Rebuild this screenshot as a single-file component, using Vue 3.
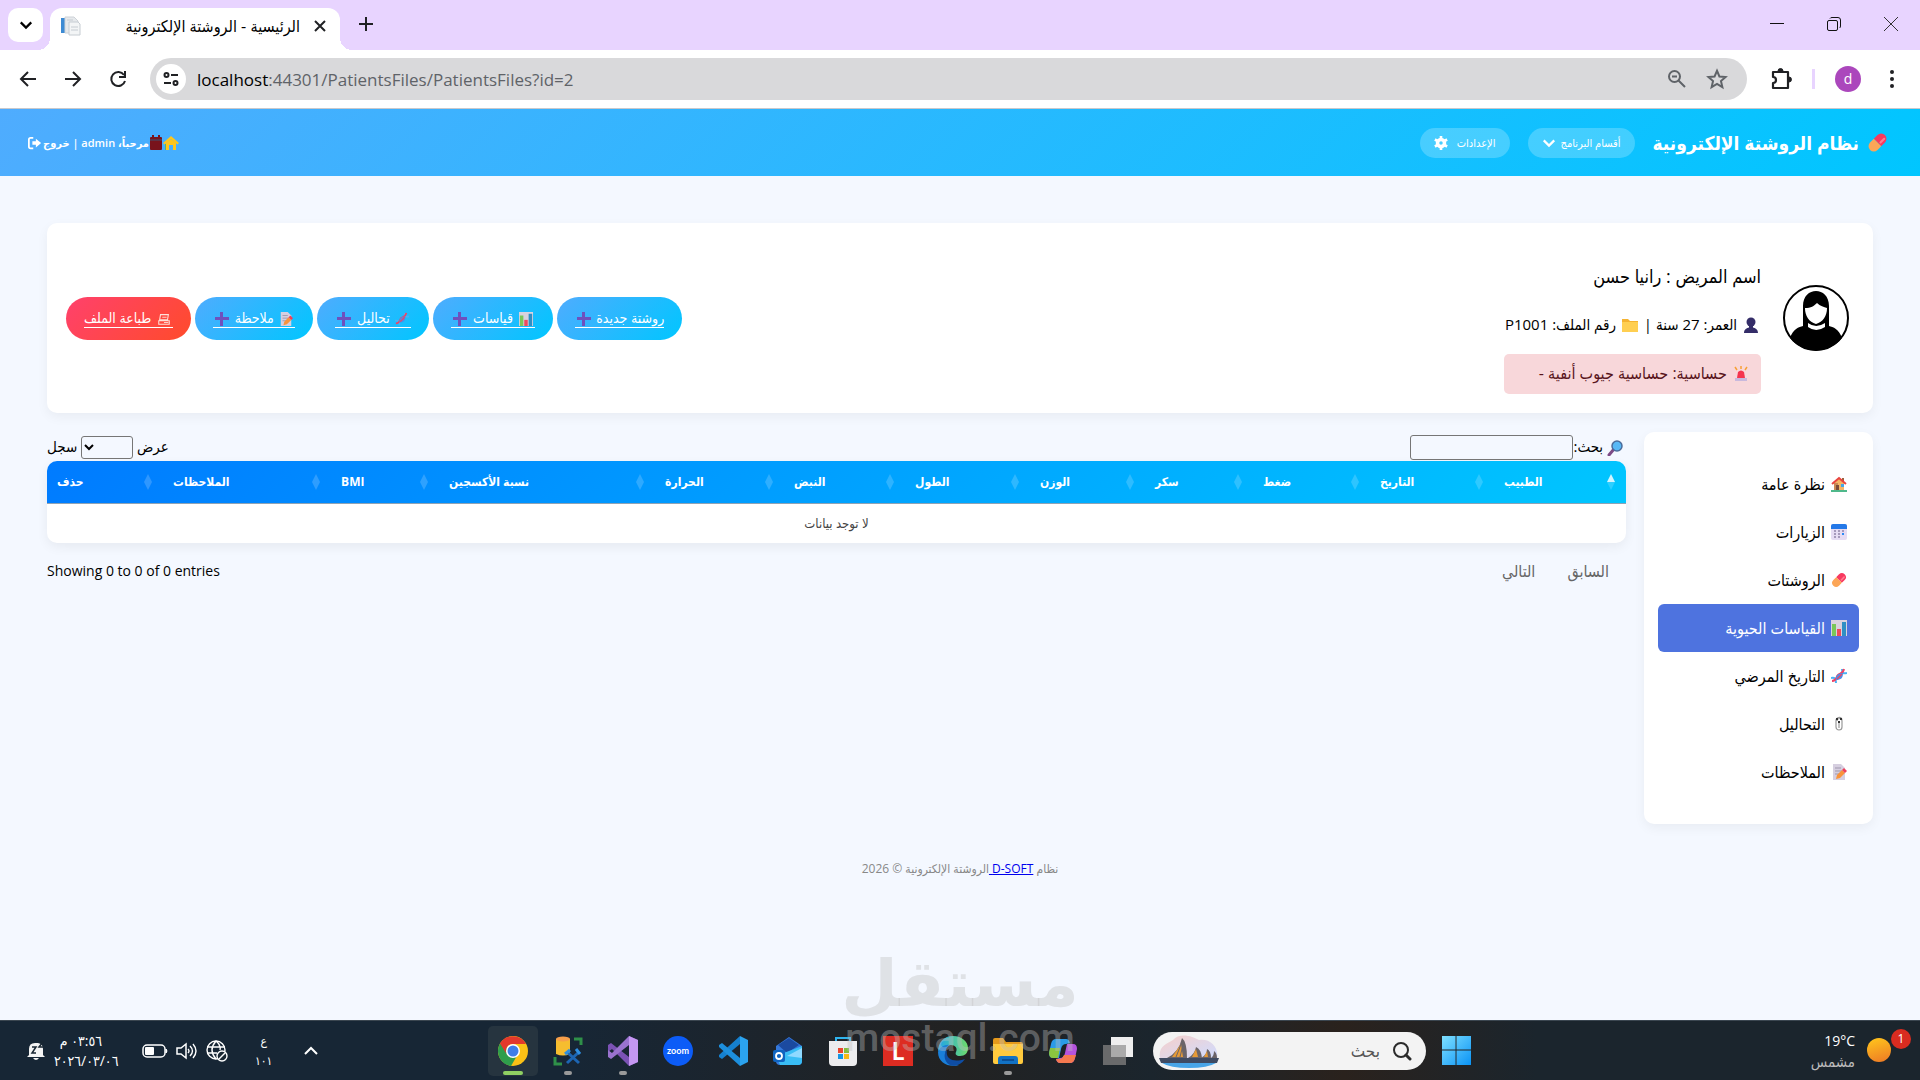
<script setup>
import { ref } from 'vue'

const search = ref('')
const pageSize = ref('')
const address = ref('localhost:44301/PatientsFiles/PatientsFiles?id=2')
const active = ref('vitals')

const actions = [
  { label: 'روشتة جديدة', plus: true },
  { label: 'قياسات', icon: 'chart', plus: true },
  { label: 'تحاليل', icon: 'dna', plus: true },
  { label: 'ملاحظة', icon: 'memo', plus: true },
  { label: 'طباعة الملف', icon: 'printer', danger: true },
]

const menu = [
  { id: 'overview', label: 'نظرة عامة', icon: 'house' },
  { id: 'visits', label: 'الزيارات', icon: 'calendar' },
  { id: 'rx', label: 'الروشتات', icon: 'pill' },
  { id: 'vitals', label: 'القياسات الحيوية', icon: 'chart' },
  { id: 'history', label: 'التاريخ المرضي', icon: 'dna' },
  { id: 'labs', label: 'التحاليل', icon: 'clip' },
  { id: 'notes', label: 'الملاحظات', icon: 'memo' },
]

// size = relative column width
const columns = [
  { label: 'الطبيب', size: 132 },
  { label: 'التاريخ', size: 124 },
  { label: 'ضغط', size: 117 },
  { label: 'سكر', size: 108 },
  { label: 'الوزن', size: 115 },
  { label: 'الطول', size: 125 },
  { label: 'النبض', size: 121 },
  { label: 'الحرارة', size: 129 },
  { label: 'نسبة الأكسجين', size: 216 },
  { label: 'BMI', size: 108 },
  { label: 'الملاحظات', size: 168 },
  { label: 'حذف', size: 116 },
]
const total = columns.reduce((sum, c) => sum + c.size, 0)

const apps = [
  { icon: 'chrome', current: true },
  { icon: 'ssms', open: true },
  { icon: 'vs', open: true },
  { icon: 'zoom', text: 'zoom' },
  { icon: 'vscode' },
  { icon: 'outlook' },
  { icon: 'store' },
  { icon: 'lapp', text: 'L' },
  { icon: 'edge' },
  { icon: 'explorer', open: true },
  { icon: 'copilot' },
  { icon: 'taskview' },
]
</script>

<template>
  <div class="screen">
    <!-- icon sprite -->
    <svg class="sprite" aria-hidden="true">
      <defs>
        <linearGradient id="g-win" x1="0" y1="0" x2="1" y2="1">
          <stop offset="0" stop-color="#7fe0ff" />
          <stop offset="1" stop-color="#0a93f5" />
        </linearGradient>
        <linearGradient id="g-edge" x1="0" y1="0" x2="1" y2="0">
          <stop offset="0" stop-color="#1fa4ea" />
          <stop offset="1" stop-color="#6fdc6a" />
        </linearGradient>
        <linearGradient id="g-sun" x1="0.3" y1="0" x2="0.6" y2="1">
          <stop offset="0" stop-color="#ffc21c" />
          <stop offset="1" stop-color="#ee7f25" />
        </linearGradient>
        <linearGradient id="g-sky" x1="0" y1="0" x2="1" y2="1">
          <stop offset="0" stop-color="#f7cfc9" />
          <stop offset="1" stop-color="#cfdcff" />
        </linearGradient>
      </defs>
      <symbol id="pill" viewBox="0 0 20 20">
        <g transform="rotate(45 10 10)">
          <path d="M5 10V5a5 5 0 0 1 10 0v5z" fill="#f8395f" />
          <path d="M5 10v5a5 5 0 0 0 10 0v-5z" fill="#fca657" />
          <path d="M12 3v5" stroke="#ff7b8f" stroke-width="2" stroke-linecap="round" />
        </g>
      </symbol>
      <symbol id="house" viewBox="0 0 16 16">
        <path d="M3 7l5-5 5 5v7H3z" fill="#f5b565" />
        <path d="M3 7h4v7H3z" fill="#c98a55" />
        <path d="M11 2h2v4h-2z" fill="#a0603c" />
        <path d="M1 8l7-6 7 6" fill="none" stroke="#e8443f" stroke-width="2" />
        <path d="M5 9h3v5H5z" fill="#7a4b3a" />
        <path d="M10 8h3v3h-3z" fill="#43a6e8" />
        <path d="M0 14h16v2H0z" fill="#4fb88b" />
      </symbol>
      <symbol id="calendar" viewBox="0 0 16 16">
        <rect width="16" height="16" rx="2" fill="#e6dcf3" />
        <path d="M0 5V2a2 2 0 0 1 2-2h12a2 2 0 0 1 2 2v3z" fill="#2479e8" />
        <path d="M3 7h10M3 10h10M3 13h7" stroke="#a69abb" stroke-width="2" stroke-dasharray="2 2" />
        <path d="M11 9h2v2h-2z" fill="#2d8cf5" />
      </symbol>
      <symbol id="chart" viewBox="0 0 16 16">
        <rect width="16" height="16" fill="#d9d2df" />
        <path d="M1 4h4v12H1z" fill="#7ac75a" />
        <path d="M6 9h4v7H6z" fill="#ee4a5c" />
        <path d="M11 2h4v14h-4z" fill="#2f8fc4" />
      </symbol>
      <symbol id="dna" viewBox="0 0 16 16">
        <path d="M0 10c4-1 5 1 5 5M11 1c0 4 1 5 5 4" fill="none" stroke="#48b4f5" stroke-width="2" />
        <path d="M1 13c5 0 4-4 6-6s5-1 6-6" fill="none" stroke="#ef4265" stroke-width="2" />
        <path d="M5 12c-1-5 3-7 7-7 0 5-2 7-7 7z" fill="#4a90e8" />
        <path d="M6 11l5-5" stroke="#ef4265" stroke-width="1.500" />
      </symbol>
      <symbol id="clip" viewBox="0 0 16 16">
        <path d="M6 5a2 2 0 0 1 5 0v6a3 3 0 0 1-6 0V5a3 3 0 0 1 6-1M8 5v7" fill="none" stroke="#999" stroke-width="1.200" />
        <path d="M5 2h2v2H5zM9 2h2v2H9zM7 5h2v2H7z" fill="#333" />
      </symbol>
      <symbol id="memo" viewBox="0 0 16 16">
        <path d="M2 0h8l4 4v12H2z" fill="#d6cfe0" />
        <path d="M4 4h6M4 7h7M4 10h4" stroke="#9f97ad" />
        <path d="M5 15l1-4 5-5 3 3-5 5z" fill="#f9933a" />
        <path d="M11 6l2-2 3 3-2 2z" fill="#ef3f5b" />
      </symbol>
      <symbol id="printer" viewBox="0 0 16 16">
        <path d="M4 3h9l-1 6H3zM2 10h12v4H2z" fill="none" stroke="#ffe0d8" stroke-width="1.200" />
        <path d="M6 6h5M8 12h5" stroke="#ffe0d8" />
      </symbol>
      <symbol id="plus" viewBox="0 0 14 14">
        <path d="M5 0h3v5h6v3H8v6H5V8H0V5h5z" fill="#6f50bd" />
      </symbol>
      <symbol id="user" viewBox="0 0 16 16">
        <circle cx="8" cy="5" r="4.500" fill="#342d68" />
        <path d="M1 16c0-4 3-5 5-5.500V8h4v2.500c2 .5 5 1.500 5 5.500z" fill="#342d68" />
      </symbol>
      <symbol id="folder" viewBox="0 0 16 16">
        <path d="M0 2h6l2 2h8v11H0z" fill="#f5b331" />
        <path d="M0 5h16v10H0z" fill="#ffcf52" />
      </symbol>
      <symbol id="siren" viewBox="0 0 16 16">
        <path d="M4 12l1-6q3-3 6 0l1 6z" fill="#f5354f" />
        <path d="M2 12h12v3H2z" fill="#c9b9dd" />
        <path d="M8 0v3M2 1l2 3M14 1l-2 3" stroke="#f7a035" stroke-width="1.500" />
      </symbol>
      <symbol id="lens" viewBox="0 0 16 16">
        <path d="M7 9l-5 6" stroke="#7d4b86" stroke-width="3" stroke-linecap="round" />
        <circle cx="10" cy="6" r="5" fill="#57b8f5" stroke="#4b6c9b" stroke-width="1.500" />
      </symbol>
      <symbol id="home" viewBox="0 0 16 16">
        <path d="M8 1l8 7-1.500 1.500L8 4 1.500 9.500 0 8z" fill="#ffc61a" />
        <path d="M3 8l5-4 5 4v7h-3v-5H6v5H3z" fill="#ffc61a" />
        <path d="M2 9h1v6H2z" fill="#58b56b" />
      </symbol>
      <symbol id="book" viewBox="0 0 12 16">
        <rect y="2" width="12" height="13" rx="1" fill="#78131c" />
        <path d="M3 0v4M9 0v4" stroke="#78131c" stroke-width="2" />
        <path d="M0 5h12" stroke="#3b5573" />
      </symbol>
      <symbol id="logout" viewBox="0 0 16 16">
        <path d="M6 2H3a2 2 0 0 0-2 2v8a2 2 0 0 0 2 2h3" fill="none" stroke="#fff" stroke-width="2" />
        <path d="M5 6h4V3l6 5-6 5v-3H5z" fill="#fff" />
      </symbol>
      <symbol id="gear" viewBox="0 0 16 16">
        <circle cx="8" cy="8" r="4" fill="none" stroke="#fff" stroke-width="4" />
        <path d="M8 0v4M8 12v4M1 4l3.500 2M11.500 10l3.500 2M1 12l3.500-2M11.500 6L15 4" stroke="#fff" stroke-width="3" />
      </symbol>
      <symbol id="down" viewBox="0 0 16 16">
        <path d="M2 5l6 6 6-6" fill="none" stroke="currentColor" stroke-width="2.500" />
      </symbol>
      <symbol id="favicon" viewBox="0 0 20 20">
        <path d="M0 2h5v15H0z" fill="#3d8bd4" />
        <path d="M4 1h9l4 4v12H4z" fill="#e6e9ec" stroke="#cdd2d7" />
        <path d="M8 6h9l2 2v11H8z" fill="#f3f5f6" stroke="#c6ccd2" />
        <path d="M6 4h6M10 11h7M10 14h7" stroke="#c6ccd2" />
      </symbol>
      <symbol id="arrow" viewBox="0 0 20 20">
        <path d="M18 10H3M10 3l-7 7 7 7" fill="none" stroke="#202124" stroke-width="2" />
      </symbol>
      <symbol id="reload" viewBox="0 0 20 20">
        <path d="M16 6a7 7 0 1 0 1 6" fill="none" stroke="#202124" stroke-width="2" />
        <path d="M17 2v6h-6" fill="none" stroke="#202124" stroke-width="2" />
      </symbol>
      <symbol id="tune" viewBox="0 0 18 18">
        <path d="M9 5h7M2 13h7" stroke="#202124" stroke-width="2" />
        <circle cx="4.500" cy="5" r="2" fill="none" stroke="#202124" stroke-width="2" />
        <circle cx="13.500" cy="13" r="2" fill="none" stroke="#202124" stroke-width="2" />
      </symbol>
      <symbol id="zoomout" viewBox="0 0 20 20">
        <circle cx="7.500" cy="7.500" r="5.500" fill="none" stroke="#5f6368" stroke-width="2" />
        <path d="M11.500 11.500L18 18M5 7.500h5" stroke="#5f6368" stroke-width="2" />
      </symbol>
      <symbol id="star" viewBox="0 0 20 20">
        <path d="M10 2.500l2.200 5.200 5.600.5-4.200 3.700 1.300 5.500-4.900-2.900-4.900 2.900 1.300-5.500L2.200 8.200l5.600-.5z" fill="none" stroke="#5f6368" stroke-width="1.800" />
      </symbol>
      <symbol id="puzzle" viewBox="0 0 22 22">
        <path d="M3 4h15v16H3v-5q3 0 3-3t-3-3z" fill="none" stroke="#202124" stroke-width="2.200" stroke-linejoin="round" />
        <path d="M8 3a2.500 2.500 0 0 1 5 0zM19 9a2.500 2.500 0 0 1 0 5z" fill="#202124" stroke="#202124" />
      </symbol>
      <symbol id="avatar" viewBox="0 0 68 68">
        <circle cx="34" cy="34" r="32" fill="#fff" stroke="#000" stroke-width="2" />
        <path d="M8 54C11 45 17 43 21 42V22C21 2 47 2 47 22v20c4 1 10 3 13 12A33 33 0 0 1 8 54z" />
        <path d="M23 24c6 0 9-2 12-5 3 3 7 4 10 5 0 8-4 14-11 16-7-2-11-8-11-16z" fill="#fff" />
        <path d="M26 39q8 6 17 0v4q-9 6-17 0z" fill="#fff" />
      </symbol>

      <symbol id="chrome" viewBox="0 0 30 30">
        <circle cx="15" cy="15" r="15" fill="#fbc116" />
        <path d="M15 15L2 7.500a15 15 0 0 0 11 22.400L20 18z" fill="#2f9e4c" />
        <path d="M2 7.500A15 15 0 0 1 28 8H15a7 7 0 0 0-6.500 10z" fill="#e3382c" />
        <circle cx="15" cy="15" r="7" fill="#fff" />
        <circle cx="15" cy="15" r="5.500" fill="#3e7de8" />
      </symbol>
      <symbol id="ssms" viewBox="0 0 30 30">
        <path d="M3 3v15q7 3 14 0V3z" fill="#f6bd2f" />
        <ellipse cx="10" cy="3" rx="7" ry="2.500" fill="#f79f4a" />
        <path d="M21 3h7v6M2 21v7h7" fill="none" stroke="#2f9049" stroke-width="3" />
        <path d="M14 27l12-11M14 16l12 11" stroke="#1d65b2" stroke-width="3" />
        <path d="M12 18l5-4M23 13l4 5" stroke="#2f8ee0" stroke-width="3" />
      </symbol>
      <symbol id="vs" viewBox="0 0 30 30">
        <path d="M21 0l9 4v22l-9 4L4 13l-4 3V9l3-2 18 14z" fill="#7c52b5" />
        <path d="M21 0L4 17l-4-3v7l3 2L21 9z" fill="#9a73cf" />
        <path d="M21 0l9 4v22l-9 4z" fill="#c597f2" />
      </symbol>
      <symbol id="zoom" viewBox="0 0 30 30">
        <circle cx="15" cy="15" r="15" fill="#0c5cf7" />
      </symbol>
      <symbol id="vscode" viewBox="0 0 30 30">
        <path d="M22 0l8 4v22l-8 4z" fill="#2ba3ef" />
        <path d="M22 0v8L4 23l-3-2v-2z" fill="#1580cf" />
        <path d="M22 30v-8L4 7 1 9v2z" fill="#1d8fdd" />
      </symbol>
      <symbol id="outlook" viewBox="0 0 30 30">
        <path d="M3 10L16 1l13 9v15q0 4-4 4H7q-4 0-4-4z" fill="#3478db" />
        <path d="M5 9l11-7 10 7-12 8z" fill="#1b4aa0" />
        <path d="M3 20L29 10v15q0 4-4 4H7z" fill="#39bdf5" />
        <path d="M14 20l15-8v10z" fill="#8fd9ff" />
        <rect y="14" width="12" height="12" rx="2" fill="#0f64c0" />
        <circle cx="6" cy="20" r="3" fill="none" stroke="#fff" stroke-width="1.800" />
      </symbol>
      <symbol id="store" viewBox="0 0 30 30">
        <path d="M8 7V2h14v5" fill="none" stroke="#2fb4ef" stroke-width="2" />
        <path d="M1 5h28v21q0 4-4 4H5q-4 0-4-4z" fill="#ececee" />
        <path d="M10 12h5v5h-5z" fill="#e9472f" />
        <path d="M16 12h5v5h-5z" fill="#84bd3c" />
        <path d="M10 18h5v5h-5z" fill="#1496e4" />
        <path d="M16 18h5v5h-5z" fill="#f7b917" />
      </symbol>
      <symbol id="lapp" viewBox="0 0 30 30">
        <path d="M0 0h30v30H0z" fill="#dd2c22" />
      </symbol>
      <symbol id="edge" viewBox="0 0 30 30">
        <path d="M0 16C0 6 6 0 15 0s15 6 15 12c0 5-3 8-8 8-4 0-5-2-4-4 2-4-1-7-5-7-6 0-11 3-13 7z" fill="url(#g-edge)" />
        <path d="M0 16C2 11 7 8 12 9c-4 2-5 6-4 10 1 6 7 9 13 10-10 3-21-2-21-13z" fill="#1a7fd9" />
        <path d="M9 14c-2 9 6 13 18 9-4 6-10 8-15 6-6-3-7-11-3-15z" fill="#0e4da4" />
      </symbol>
      <symbol id="explorer" viewBox="0 0 30 30">
        <path d="M0 4q0-2 2-2h8l3 4h15q2 0 2 2v8H0z" fill="#e59a1c" />
        <path d="M0 8h30v18q0 2-2 2H2q-2 0-2-2z" fill="#ffca3e" />
        <path d="M5 28v-5q0-3 3-3h14q3 0 3 3v5z" fill="#1272c4" />
        <path d="M9 24h12" stroke="#0b4f96" stroke-width="2" />
      </symbol>
      <symbol id="copilot" viewBox="0 0 30 30">
        <path d="M8 3h10q3 0 4 4l-4 1q-4 0-5 5l-2 9H5q-4 0-4-5L3 8q1-5 5-5z" fill="#2b9be8" />
        <path d="M2 12h10l-2 10H5q-4 0-4-5z" fill="#8ac43f" />
        <path d="M22 27H12q-3 0-4-4l4-1q4 0 5-5l2-9h6q4 0 4 5l-2 9q-1 5-5 5z" fill="#b653dd" />
        <path d="M16 19h12l-1 3q-1 5-5 5H12q-3 0-4-4h4q3-1 4-4z" fill="#f5794f" />
      </symbol>
      <symbol id="taskview" viewBox="0 0 30 30">
        <path d="M8 1h22v20H8z" fill="#eee" />
        <path d="M0 9h23v20H0z" fill="#777" fill-opacity="0.85" />
        <path d="M8 9h15v12H8z" fill="#aaa" />
      </symbol>
      <symbol id="windows" viewBox="0 0 30 30">
        <path d="M0 0h14v14H0zM15 0h15v14H15zM0 15h14v15H0zM15 15h15v15H15z" fill="url(#g-win)" />
      </symbol>
      <symbol id="skyline" viewBox="0 0 60 34">
        <path d="M1 24C-1 12 8 10 14 6 20-2 34 2 40 6c10-2 20 6 18 18z" fill="url(#g-sky)" />
        <path d="M8 24q12-6 15-20 5 4 5 20zM29 24q7-4 8-11 5 2 6 11zM42 24q6-3 6-9 4 2 4 9zM52 24q3-2 3-7 3 2 3 7z" fill="#6b6468" />
        <path d="M13 23l9-13 2 13zM33 23l4-8 2 8zM45 23l3-6 1 6z" fill="#e59a38" />
        <path d="M17 23l6-15M21 23l3-12" stroke="#6b6468" />
        <path d="M0 24h60l-2 5H2z" fill="#3f4b63" />
        <path d="M3 29h54q-8 5-27 5T3 29z" fill="#48a5e8" />
      </symbol>
      <symbol id="find" viewBox="0 0 20 20">
        <circle cx="9" cy="9" r="7" fill="none" stroke="#2b2b2b" stroke-width="2" />
        <path d="M14 14l4 4" stroke="#2b2b2b" stroke-width="3" stroke-linecap="round" />
      </symbol>
      <symbol id="bell" viewBox="0 0 18 20">
        <path d="M2 14V8q0-6 6-6h3q5 1 5 6v6l2 2H0zM6 17h6q-3 4-6 0z" fill="#f4f4f4" />
        <path d="M5 6h4l-4 6h4M12 1h4l-4 5h4" fill="none" stroke="#182632" stroke-width="1.500" />
      </symbol>
      <symbol id="battery" viewBox="0 0 26 14">
        <rect x="1" y="1" width="22" height="12" rx="4" fill="none" stroke="#fff" stroke-width="1.500" />
        <rect x="3" y="3" width="9" height="8" rx="1" fill="#fff" />
        <path d="M24 5q2 2 0 4z" fill="#fff" stroke="#fff" />
      </symbol>
      <symbol id="volume" viewBox="0 0 22 20">
        <path d="M1 7h4l5-4v14l-5-4H1z" fill="none" stroke="#fff" stroke-width="1.500" />
        <path d="M12 8q2 2 0 4M14 5q5 5 0 10M17 3q6 7 0 14" fill="none" stroke="#fff" stroke-width="1.400" />
      </symbol>
      <symbol id="globe" viewBox="0 0 22 22">
        <g fill="none" stroke="#fff" stroke-width="1.400">
          <circle cx="10" cy="10" r="9" />
          <path d="M1 7h18M1 13h10M10 1q-8 9 0 18M10 1q5 4 4 9" />
          <circle cx="16" cy="16" r="5" fill="#182632" />
          <path d="M13 19l6-6" />
        </g>
      </symbol>
    </svg>

    <!-- browser -->
    <div class="tabs">
      <button class="tab-list" aria-label="Search tabs"><svg width="14" height="14"><use href="#down" /></svg></button>
      <div class="tab">
        <svg width="20" height="20"><use href="#favicon" /></svg>
        <span class="tab-title" dir="rtl">الرئيسية - الروشتة الإلكترونية</span>
        <button aria-label="Close tab">
          <svg width="12" height="12" viewBox="0 0 12 12"><path d="M1 1l10 10M11 1L1 11" stroke="#202124" stroke-width="2" /></svg>
        </button>
      </div>
      <button class="new-tab" aria-label="New tab">
        <svg width="14" height="14" viewBox="0 0 14 14"><path d="M7 0v14M0 7h14" stroke="#202124" stroke-width="2" /></svg>
      </button>
      <div class="window-controls">
        <button aria-label="Minimize"><svg width="14" height="14" viewBox="0 0 14 14"><path d="M0 6.500h14" stroke="#111" /></svg></button>
        <button aria-label="Restore">
          <svg width="14" height="14" viewBox="0 0 14 14">
            <rect x="0.500" y="3.500" width="10" height="10" rx="1.500" fill="none" stroke="#111" />
            <path d="M3 1.500Q3.500.5 5 .5h6q2.500 0 2.500 2.500v6q0 1.500-1 2" fill="none" stroke="#111" />
          </svg>
        </button>
        <button aria-label="Close"><svg width="14" height="14" viewBox="0 0 14 14"><path d="M0 0l14 14M14 0L0 14" stroke="#333" /></svg></button>
      </div>
    </div>
    <div class="toolbar">
      <button aria-label="Back"><svg width="20" height="20"><use href="#arrow" /></svg></button>
      <button aria-label="Forward"><svg class="flip" width="20" height="20"><use href="#arrow" /></svg></button>
      <button aria-label="Reload"><svg width="20" height="20"><use href="#reload" /></svg></button>
      <div class="omnibox">
        <span class="site-info"><svg width="18" height="18"><use href="#tune" /></svg></span>
        <label class="url">
          <span class="url-text">localhost<span>:44301/PatientsFiles/PatientsFiles?id=2</span></span>
          <input v-model="address" aria-label="Address" />
        </label>
        <svg width="20" height="20"><use href="#zoomout" /></svg>
        <svg width="22" height="22"><use href="#star" /></svg>
      </div>
      <svg class="puzzle" width="22" height="22"><use href="#puzzle" /></svg>
      <span class="divider"></span>
      <span class="profile">d</span>
      <svg width="6" height="20" viewBox="0 0 6 20" fill="#202124">
        <circle cx="3" cy="3" r="2" /><circle cx="3" cy="10" r="2" /><circle cx="3" cy="17" r="2" />
      </svg>
    </div>

    <!-- application -->
    <div class="app" dir="rtl">
      <header class="topbar">
        <h1><svg width="21" height="21"><use href="#pill" /></svg>نظام الروشتة الإلكترونية</h1>
        <button class="nav-btn wide">أقسام البرنامج <svg width="14" height="14"><use href="#down" /></svg></button>
        <button class="nav-btn">الإعدادات <svg width="14" height="14"><use href="#gear" /></svg></button>
        <div class="account">
          <svg width="16" height="16"><use href="#home" /></svg>
          <svg width="12" height="16"><use href="#book" /></svg>
          <span>مرحباً، admin | <a href="#">خروج</a></span>
          <svg width="14" height="14"><use href="#logout" /></svg>
        </div>
      </header>

      <main>
        <section class="card patient">
          <svg class="avatar" width="68" height="70"><use href="#avatar" /></svg>
          <div class="info">
            <h2>اسم المريض : رانيا حسن</h2>
            <p>
              <svg width="16" height="16"><use href="#user" /></svg> العمر: 27 سنة |
              <svg width="16" height="16"><use href="#folder" /></svg> رقم الملف: P1001
            </p>
            <div class="alert"><svg width="16" height="16"><use href="#siren" /></svg> حساسية: حساسية جيوب أنفية -</div>
          </div>
          <div class="actions">
            <a v-for="a in actions" :key="a.label" href="#" :class="{ danger: a.danger }">
              <span>
                <svg v-if="a.icon" width="14" height="14"><use :href="'#' + a.icon" /></svg>
                {{ a.label }}
                <svg v-if="a.plus" width="14" height="14"><use href="#plus" /></svg>
              </span>
            </a>
          </div>
        </section>

        <div class="columns">
          <nav class="card side">
            <a
              v-for="m in menu"
              :key="m.id"
              href="#"
              :class="{ active: m.id === active }"
              @click.prevent="active = m.id"
            >
              <svg width="16" height="16"><use :href="'#' + m.icon" /></svg>{{ m.label }}
            </a>
          </nav>

          <section class="data">
            <div class="controls">
              <label><svg width="16" height="16"><use href="#lens" /></svg> بحث:<input v-model="search" type="search" /></label>
              <label>عرض <select v-model="pageSize"><option value=""></option></select> سجل</label>
            </div>
            <div class="table-wrap">
              <table>
                <colgroup>
                  <col v-for="c in columns" :key="c.label" :style="{ width: (c.size / total) * 100 + '%' }" />
                </colgroup>
                <thead>
                  <tr>
                    <th v-for="(c, i) in columns" :key="c.label" scope="col">
                      <div class="th">
                        <svg width="8" height="16" viewBox="0 0 8 16" :class="{ sorted: i === 0 }">
                          <path class="up" d="M0 8l4-8 4 8z" /><path d="M0 8l4 8 4-8z" />
                        </svg>
                        {{ c.label }}
                      </div>
                    </th>
                  </tr>
                </thead>
                <tbody>
                  <tr><td :colspan="columns.length">لا توجد بيانات</td></tr>
                </tbody>
              </table>
            </div>
            <div class="pager">
              <div class="pages">
                <button disabled>السابق</button>
                <button disabled>التالي</button>
              </div>
              <span dir="ltr">Showing 0 to 0 of 0 entries</span>
            </div>
          </section>
        </div>
      </main>

      <footer>نظام <a href="#">D-SOFT </a>الروشتة الإلكترونية © 2026</footer>
    </div>

    <!-- desktop taskbar -->
    <div class="taskbar">
      <div class="tray">
        <svg width="18" height="20"><use href="#bell" /></svg>
        <div class="clock"><span dir="rtl">٠٣:٥٦ م</span><span>٢٠٢٦/٠٣/٠٦</span></div>
        <div class="status">
          <svg width="26" height="14"><use href="#battery" /></svg>
          <svg width="22" height="20"><use href="#volume" /></svg>
          <svg width="22" height="22"><use href="#globe" /></svg>
        </div>
        <div class="lang"><span>ع</span><span>١٠١</span></div>
        <svg width="14" height="14" viewBox="0 0 14 14"><path d="M1 10l6-6 6 6" fill="none" stroke="#fff" stroke-width="2" /></svg>
      </div>
      <div class="dock">
        <button v-for="a in apps" :key="a.icon" :aria-label="a.icon" :class="{ current: a.current, open: a.open }">
          <svg width="30" height="30"><use :href="'#' + a.icon" /></svg>
          <b v-if="a.text" :class="a.icon">{{ a.text }}</b>
        </button>
        <div class="find" dir="rtl">
          <svg width="20" height="20"><use href="#find" /></svg>
          <input type="text" placeholder="بحث" aria-label="بحث" />
          <svg width="60" height="34"><use href="#skyline" /></svg>
        </div>
        <svg width="29" height="29"><use href="#windows" /></svg>
      </div>
      <div class="weather">
        <div><span>19°C</span><span class="sky" dir="rtl">مشمس</span></div>
        <div class="sun">
          <svg width="25" height="25" viewBox="0 0 25 25"><circle cx="12" cy="12" r="12" fill="url(#g-sun)" /></svg>
          <span>1</span>
        </div>
      </div>
    </div>

    <div class="watermark"><span class="mark">مستقل</span><span>mostaql.com</span></div>
  </div>
</template>

<style>
body {
  margin: 0;
  overflow-x: hidden;
}
</style>

<style scoped>
* {
  box-sizing: border-box;
}

.screen {
  position: relative;
  display: flex;
  flex-direction: column;
  min-height: 100vh;
  font-family: 'Open Sans', 'DejaVu Sans Condensed', 'DejaVu Sans', sans-serif;
  color: #000;
}

.sprite {
  position: absolute;
  width: 0;
  height: 0;
}

svg {
  flex: none;
}

button {
  font: inherit;
  color: inherit;
  background: none;
  border: 0;
  padding: 0;
}

/* tabs */
.tabs {
  display: flex;
  align-items: center;
  height: 50px;
  padding-left: 8px;
  background: #e8d4ff;
}

.tab-list {
  display: grid;
  place-items: center;
  width: 35px;
  height: 34px;
  border-radius: 10px;
  background: #fff;
}

.tab {
  position: relative;
  display: flex;
  align-items: center;
  align-self: flex-end;
  width: 290px;
  height: 42px;
  margin-left: 7px;
  padding: 0 14px 6px 11px;
  background: #fff;
  border-radius: 12px 12px 0 0;
}

.tab::before,
.tab::after {
  content: '';
  position: absolute;
  bottom: 0;
  width: 12px;
  height: 12px;
}

.tab::before {
  right: 100%;
  background: radial-gradient(circle at 0 0, transparent 12px, #fff 12px);
}

.tab::after {
  left: 100%;
  background: radial-gradient(circle at 100% 0, transparent 12px, #fff 12px);
}

.tab-title {
  flex: 1;
  margin-right: 14px;
  font-size: 16px;
  white-space: nowrap;
}

.new-tab {
  margin-left: 19px;
}

.window-controls {
  display: flex;
  gap: 43px;
  margin-left: auto;
  padding-right: 22px;
}

.toolbar {
  display: flex;
  align-items: center;
  height: 59px;
  padding: 0 25px 0 18px;
  background: #fff;
  border-bottom: 1px solid #c8c8cc;
}

.toolbar > button {
  width: 20px;
  height: 20px;
  margin-right: 25px;
}

.flip {
  transform: scaleX(-1);
}

.omnibox {
  flex: 1;
  display: flex;
  align-items: center;
  gap: 19px;
  height: 42px;
  margin-right: 23px;
  margin-left: -3px;
  padding: 0 19px 0 6px;
  border-radius: 21px;
  background: #d9d9db;
}

.site-info {
  display: grid;
  place-items: center;
  width: 30px;
  height: 30px;
  border-radius: 50%;
  background: #fff;
}

.url {
  position: relative;
  flex: 1;
  margin-left: -8px;
  font-size: 17px;
}

.url-text span {
  color: #5f6368;
}

.url input {
  position: absolute;
  inset: 0;
  border: 0;
  padding: 0;
  background: none;
  font: inherit;
  color: transparent;
}

.divider {
  width: 3px;
  height: 20px;
  margin: 0 20px;
  background: #e8d4ff;
}

.profile {
  width: 26px;
  height: 26px;
  margin-right: 28px;
  border-radius: 50%;
  background: #ab47bc;
  color: #fff;
  font-size: 14px;
  line-height: 25px;
  text-align: center;
}

/* application */
.app {
  flex: 1;
  background: #f4f8ff;
}

.topbar {
  display: flex;
  align-items: center;
  gap: 18px;
  height: 67px;
  padding: 0 32px 0 28px;
  background: linear-gradient(135deg, #4facfe, #00c6ff);
  color: #fff;
}

h1 {
  display: flex;
  align-items: center;
  gap: 8px;
  margin: 0;
  font-size: 19px;
  font-weight: 700;
}

.nav-btn {
  display: flex;
  align-items: center;
  justify-content: space-between;
  width: 90px;
  height: 30px;
  padding: 0 14px;
  border-radius: 15px;
  background: rgba(255, 255, 255, 0.22);
  font-size: 11px;
  white-space: nowrap;
}

.nav-btn.wide {
  width: 107px;
}

.account {
  display: flex;
  align-items: center;
  gap: 1px;
  margin-right: auto;
  font-size: 11px;
  font-weight: 600;
}

.account a {
  color: inherit;
  text-decoration: none;
}

main {
  padding: 47px 47px 0;
}

.card {
  background: #fff;
  border-radius: 10px;
  box-shadow: 0 4px 12px rgba(0, 0, 0, 0.05);
}

.patient {
  display: flex;
  align-items: center;
  height: 190px;
  padding: 0 23px 0 19px;
}

.info {
  margin: 17px 21px 0 0;
}

.info h2 {
  margin: 0;
  font-size: 18px;
  font-weight: 500;
  line-height: 32px;
}

.info p {
  margin: 16px 0 14px;
  font-size: 15px;
  line-height: 32px;
}

.info svg {
  margin: 0 2px;
}

.info svg,
.controls svg,
.actions svg {
  vertical-align: middle;
}

.alert {
  width: 257px;
  height: 40px;
  padding: 0 10px;
  border-radius: 5px;
  background: #f8d7da;
  color: #58151c;
  font-size: 16px;
  line-height: 38px;
  white-space: nowrap;
}

.actions {
  display: flex;
  gap: 4px;
  margin-right: auto;
}

.actions a {
  display: flex;
  align-items: center;
  height: 43px;
  padding: 0 18px;
  border-radius: 22px;
  background: linear-gradient(135deg, #4facfe, #00c6ff);
  color: #fff;
  font-size: 14px;
  text-decoration: none;
}

.actions a.danger {
  background: linear-gradient(135deg, #ff416c, #ff4b2b);
}

.actions span {
  border-bottom: 1px solid #fff;
  line-height: 18px;
  white-space: nowrap;
}

.actions svg {
  margin: 0 2px;
}

.columns {
  display: flex;
  align-items: flex-start;
  gap: 18px;
  margin-top: 19px;
}

.side {
  width: 229px;
  padding: 28px 14px;
}

.side a {
  display: flex;
  align-items: center;
  gap: 6px;
  height: 48px;
  padding: 0 12px;
  border-radius: 6px;
  color: #000;
  font-size: 16px;
  text-decoration: none;
}

.side a.active {
  background: #4e73df;
  color: #fff;
}

.data {
  flex: 1;
}

.controls {
  display: flex;
  align-items: center;
  justify-content: space-between;
  height: 29px;
  padding: 2px 3px 0 0;
  font-size: 15px;
}

.controls input {
  width: 163px;
  height: 25px;
  border: 1px solid #767676;
  border-radius: 3px;
  background: transparent;
  vertical-align: middle;
}

.controls select {
  width: 52px;
  height: 23px;
  border: 1px solid #767676;
  border-radius: 3px;
  background-color: transparent;
  vertical-align: middle;
}

.table-wrap {
  overflow: hidden;
  border-radius: 10px;
  background: #fff;
  box-shadow: 0 4px 12px rgba(0, 0, 0, 0.06);
}

table {
  width: 100%;
  border-collapse: collapse;
  table-layout: fixed;
}

thead {
  background: linear-gradient(135deg, #007bff, #00c6ff);
  color: #fff;
}

th {
  height: 42px;
  padding: 0 11px 0 10px;
  border-bottom: 1px solid #8fa3b5;
  font-size: 12px;
}

.th {
  display: flex;
  align-items: center;
  justify-content: space-between;
}

.th path {
  fill: rgba(255, 255, 255, 0.18);
}

.th .sorted .up {
  fill: #d3f5ff;
}

td {
  height: 40px;
  padding: 0;
  color: #444;
  font-size: 13px;
  text-align: center;
}

.pager {
  display: flex;
  align-items: center;
  justify-content: space-between;
  margin-top: 13px;
  padding-right: 17px;
  font-size: 14px;
  line-height: 30px;
}

.pages {
  display: flex;
  gap: 32px;
  color: #666;
  font-size: 16px;
}

footer {
  margin-top: 34px;
  color: #888;
  font-size: 12px;
  line-height: 22px;
  text-align: center;
}

footer a {
  color: #0000ee;
}

/* taskbar */
.taskbar {
  display: grid;
  grid-template-columns: 1fr auto 1fr;
  align-items: center;
  height: 60px;
  padding: 0 9px 0 27px;
  border-top: 1px solid #3b4650;
  background: linear-gradient(90deg, #172635 30%, #222 50%, #1b252d 60%, #2a221d 70%, #1b252d 80%);
  color: #fff;
  font-size: 14px;
}

.tray,
.status,
.dock,
.weather {
  display: flex;
  align-items: center;
}

.clock,
.lang,
.weather div:first-child {
  display: flex;
  flex-direction: column;
  line-height: 20px;
  white-space: nowrap;
}

.clock {
  width: 70px;
  margin: 0 18px 0 9px;
  font-size: 14px;
}

.clock span:first-child {
  width: 48px;
  text-align: right;
}

.status {
  gap: 8px;
}

.lang {
  margin: 0 32px 0 27px;
  font-size: 12px;
  text-align: center;
}

.dock {
  margin-left: 21px;
}

.dock button {
  position: relative;
  display: grid;
  place-items: center;
  width: 50px;
  height: 50px;
  margin-right: 5px;
  border-radius: 5px;
}

.dock b {
  position: absolute;
  inset: 0;
  display: grid;
  place-items: center;
  font-family: Lato, sans-serif;
}

.dock .zoom {
  font-size: 9px;
}

.dock .lapp {
  font-size: 24px;
}

.dock .current {
  background: #26343f;
}

.open::after,
.current::after {
  content: '';
  position: absolute;
  bottom: 1px;
  width: 8px;
  height: 4px;
  border-radius: 2px;
  background: #9a9a9a;
}

.current::after {
  width: 20px;
  background: #8fcf62;
}

.find {
  display: flex;
  align-items: center;
  width: 273px;
  height: 38px;
  margin: 0 16px 0 5px;
  padding: 0 14px 0 6px;
  border-radius: 19px;
  background: #f3f3f3;
}

.find input {
  flex: 1;
  min-width: 0;
  margin-right: 12px;
  border: 0;
  padding: 0;
  background: none;
  font: inherit;
  font-size: 17px;
}

.find input::placeholder {
  color: #555;
}

.weather {
  justify-content: flex-end;
}

.weather div:first-child {
  text-align: right;
}

.sky {
  color: #bbb;
  font-size: 15px;
}

.sun {
  position: relative;
  width: 44px;
  height: 25px;
  margin-left: 12px;
}

.sun span {
  position: absolute;
  top: -9px;
  right: 0;
  width: 20px;
  height: 20px;
  border-radius: 50%;
  background: #d92c20;
  font-size: 12px;
  line-height: 20px;
  text-align: center;
}

.watermark {
  position: absolute;
  right: 0;
  bottom: 20px;
  left: 0;
  display: flex;
  flex-direction: column;
  align-items: center;
  color: rgba(193, 193, 193, 0.4);
  font-family: Roboto, 'DejaVu Sans', sans-serif;
  font-size: 39px;
  font-weight: 500;
  line-height: 44px;
  pointer-events: none;
}

.mark {
  font-size: 65px;
  font-weight: 700;
  line-height: 64px;
}
</style>
